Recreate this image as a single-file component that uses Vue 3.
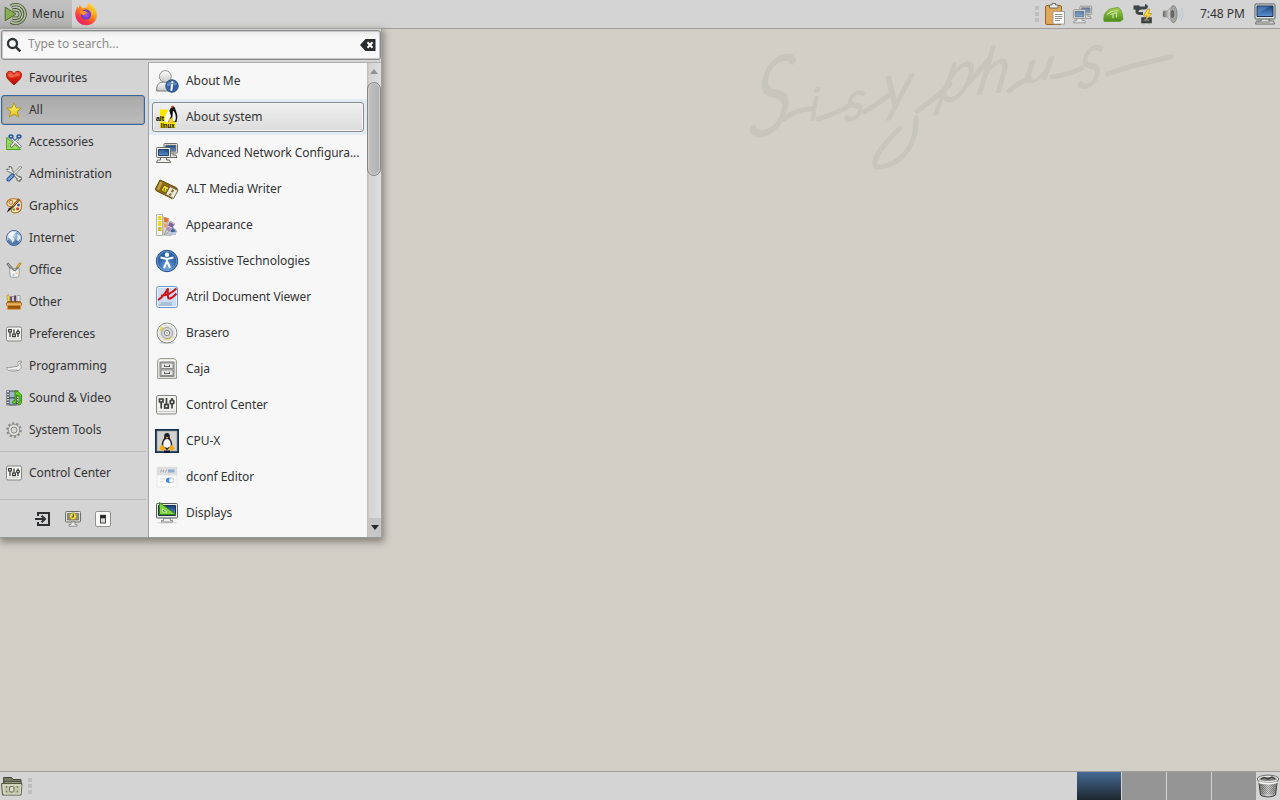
<script setup>
const categories = [
  ['heart', 'Favourites'],
  ['star', 'All'],
  ['accessories', 'Accessories'],
  ['tools', 'Administration'],
  ['palette', 'Graphics'],
  ['globe', 'Internet'],
  ['office', 'Office'],
  ['other', 'Other'],
  ['prefs', 'Preferences'],
  ['lamp', 'Programming'],
  ['media', 'Sound & Video'],
  ['gear', 'System Tools'],
]
const apps = [
  ['aboutme', 'About Me'],
  ['alt', 'About system'],
  ['network', 'Advanced Network Configura...'],
  ['usb', 'ALT Media Writer'],
  ['appearance', 'Appearance'],
  ['access', 'Assistive Technologies'],
  ['atril', 'Atril Document Viewer'],
  ['disc', 'Brasero'],
  ['cabinet', 'Caja'],
  ['control', 'Control Center'],
  ['cpux', 'CPU-X'],
  ['dconf', 'dconf Editor'],
  ['displays', 'Displays'],
]
</script>

<template>
  <div class="desktop">
    <svg class="defs" width="0" height="0">
      <defs>
        <linearGradient id="blue" x1="0" y1="0" x2="0" y2="1"><stop offset="0" stop-color="#16407c" /><stop offset="1" stop-color="#5f94d2" /></linearGradient>
        <linearGradient id="red" x1="0" y1="0" x2="0" y2="1"><stop offset="0" stop-color="#f04a30" /><stop offset=".5" stop-color="#d81f0c" /><stop offset="1" stop-color="#a81000" /></linearGradient>
        <linearGradient id="gold" x1="0" y1="0" x2="0" y2="1"><stop offset="0" stop-color="#fff48a" /><stop offset="1" stop-color="#e5c410" /></linearGradient>
        <linearGradient id="grey" x1="0" y1="0" x2="0" y2="1"><stop offset="0" stop-color="#fff" /><stop offset="1" stop-color="#c6c6c2" /></linearGradient>
        <linearGradient id="steel" x1="0" y1="0" x2="1" y2="0"><stop offset="0" stop-color="#686863" /><stop offset=".5" stop-color="#ddd" /><stop offset="1" stop-color="#777" /></linearGradient>
        <linearGradient id="fox" x1=".9" y1="0" x2=".2" y2="1"><stop offset="0" stop-color="#fff04b" /><stop offset=".4" stop-color="#ff9b1c" /><stop offset=".72" stop-color="#fb3e3c" /><stop offset="1" stop-color="#e41b87" /></linearGradient>
        <radialGradient id="glow"><stop offset="0" stop-color="#b45cf2" /><stop offset="1" stop-color="#5d36c8" /></radialGradient>
        <radialGradient id="earth" cx=".35" cy=".3"><stop offset="0" stop-color="#f2f8ff" /><stop offset=".5" stop-color="#a5bedc" /><stop offset="1" stop-color="#4c78b0" /></radialGradient>
        <radialGradient id="acc" cx=".5" cy=".8"><stop offset="0" stop-color="#77a6df" /><stop offset="1" stop-color="#2c62a8" /></radialGradient>
        <linearGradient id="green" x1="0" y1="0" x2="0" y2="1"><stop offset="0" stop-color="#a6d04c" /><stop offset="1" stop-color="#498a1e" /></linearGradient>
        <pattern id="mesh" width="2" height="2" patternUnits="userSpaceOnUse"><path d="M0 0h1v1H0zM1 1h1v1H1z" fill="#60605c" /></pattern>
      </defs>

      <symbol id="mate" viewBox="0 0 24 24">
        <g fill="none" stroke="#40552c" stroke-width="3.4"><path d="M6.500 4.200A9.400 9.400 0 1 1 6.500 19.800" /><path d="M8.500 7.800H12a4.200 4.200 0 0 1 0 8.400H8.500" /></g>
        <g fill="none" stroke="#b1bf9d" stroke-width="1.700"><path d="M6.500 4.200A9.400 9.400 0 1 1 6.500 19.800" /><path d="M8.500 7.800H12a4.200 4.200 0 0 1 0 8.400H8.500" /></g>
        <path d="M1.200 5.200L12 12 1.200 18.800z" fill="#88ad54" stroke="#4c6a2c" />
      </symbol>
      <symbol id="firefox" viewBox="0 0 24 24">
        <path d="M15.8.8C17 3 19 4 20.700 6.200l1 1.300c2.300 4.500 1.500 9.500-1.500 12.500-4.500 4.600-12 4.300-16.200-.200C.800 16.200.400 10.500 2.600 6.400L3 4.400l1.800 1.900L5.600 3.100 8.800 6l3.600-.600C13.500 3.600 14.200 2 15.800.8z" fill="url(#fox)" />
        <circle cx="12" cy="12.600" r="5" fill="url(#glow)" />
        <path d="M6 9.200c2 .5 3-.8 4.800-.1 1.400.6 2.400 1.100 2.700 2.300-1.300-.4-2 .2-2.900 1-1 .9-2.300.8-3.400-.3-.8-.7-1.200-1.700-1.200-2.900z" fill="#ff9920" />
        <path d="M13 5.500c3.500.8 5.500 3.800 5 7.500 1-1 1.400-2.600 1.300-4z" fill="#ffc92b" />
      </symbol>
      <symbol id="search" viewBox="0 0 16 16">
        <circle cx="6.500" cy="6.500" r="4.500" fill="none" stroke="#2e3436" stroke-width="2.300" /><path d="M9.800 9.800l4.500 4.500" stroke="#2e3436" stroke-width="2.600" />
      </symbol>
      <symbol id="clear" viewBox="0 0 16 12">
        <path d="M5.500 0H15.500V12H5.500L0 6z" fill="#2a2d2e" /><path d="M7.500 3.300l5 5.400M12.500 3.300l-5 5.400" stroke="#fff" stroke-width="2" />
      </symbol>

      <symbol id="heart" viewBox="0 0 16 16">
        <path d="M8 15C6 12.500.5 9.700.5 5 .5 2.600 2.100 1.300 4 1.300c1.800 0 3.200.9 4 2.500.8-1.600 2.200-2.500 4-2.500 2 0 3.500 1.300 3.500 3.700 0 4.700-5.500 7.500-7.500 10z" fill="url(#red)" stroke="#a01503" stroke-width=".9" />
        <path d="M2 5.500C2.200 3.300 5.200 2 7.500 5.300 10 2 13.800 3 14 5.500 11 6.500 8.500 6.300 7 7.500 5 8 3 7.600 2 5.500z" fill="#ff8772" opacity=".55" />
      </symbol>
      <symbol id="star" viewBox="0 0 16 16">
        <path d="M8 .8l2 5 5.300.3-4.100 3.500 1.500 5.300L8 12l-4.700 2.900 1.500-5.300L.7 6.100 6 5.800z" fill="url(#gold)" stroke="#b09010" stroke-width=".9" stroke-linejoin="round" />
      </symbol>
      <symbol id="accessories" viewBox="0 0 16 16">
        <path d="M.6 3.500V15.500H14.500z" fill="#9fe06a" stroke="#4ba11c" /><path d="M3 9v4h4.500z" fill="#d8e8cb" stroke="#58a82b" stroke-width=".7" />
        <path d="M6 5l8 7.500M11.500 5l-6 7" stroke="#70706c" stroke-width="3" stroke-linecap="round" /><path d="M6 5l8 7.500M11.500 5l-6 7" stroke="#eee" stroke-width="1.600" stroke-linecap="round" />
        <g fill="#c9d6e6" stroke="#295799" stroke-width="1.500"><ellipse cx="5" cy="2.500" rx="1.900" ry="1.500" /><ellipse cx="13" cy="2.500" rx="1.900" ry="1.500" /></g>
        <path d="M6.500 4.300L9 6.500l2.500-2.200" fill="none" stroke="#4e80c0" stroke-width="1.300" />
      </symbol>
      <symbol id="tools" viewBox="0 0 16 16">
        <g stroke-linecap="round"><path d="M4 4l8 8" stroke="#737370" stroke-width="3.200" /><path d="M1.300 3.500C1.500 5.500 4 6 5 5M3.500 1C5.500 1 6 3 5 5M11.500 11c-.8 2 .2 3.800 2.300 3.800M11.500 11c2-.6 3.800.3 3.500 2.300" fill="none" stroke="#737370" stroke-width="2.100" /><path d="M4 4l8 8M2 4.300L4 5 5 4 4.200 2M12 11.500l.5 2.200M12 12l2.200.6" fill="none" stroke="#f4f4f3" stroke-width="1.400" />
        <path d="M14.500 1.500L8 8" stroke="#80807e" stroke-width="2.500" /><path d="M14.500 1.500L8 8" stroke="#f4f4f3" stroke-width="1.200" />
        <path d="M6.500 9.500l-4 4" stroke="#244f8d" stroke-width="4" /><path d="M6.500 9.500l-4 4" stroke="#7aa7dc" stroke-width="2" /></g>
      </symbol>
      <symbol id="palette" viewBox="0 0 16 16">
        <path d="M3.500 1.500C6 .2 12 .5 14.500 3c1.500 2 1.300 8-.3 9.800-2 2.500-7.800 2.600-8.600.8-.8-2 1.300-3 .3-4.200C5 8.300 1.500 9 1 6.500.6 4.500 1.500 2.500 3.500 1.500z" fill="#fae8c5" stroke="#b66c18" stroke-width="1.100" />
        <circle cx="5" cy="4.300" r="2" fill="#d9d5cc" stroke="#b66c18" stroke-width=".9" /><circle cx="12.500" cy="7" r="1.500" fill="#3465a4" /><circle cx="8" cy="11.500" r="1.300" fill="#68a330" /><circle cx="11.500" cy="10.800" r="1.500" fill="#dc3522" /><circle cx="8.500" cy="4" r="1.100" fill="#e4dc3c" />
        <path d="M13.500 1L6 9.500" stroke="#6a4215" stroke-width="2.300" /><path d="M13.300 1.100L7 8.300" stroke="#db9c50" stroke-width="1" /><path d="M6.500 9L4.200 12 .7 14.800 3 10z" fill="#141414" />
      </symbol>
      <symbol id="globe" viewBox="0 0 16 16">
        <circle cx="8" cy="8" r="7.500" fill="url(#earth)" stroke="#36558a" stroke-width=".9" /><circle cx="8" cy="8" r="6.700" fill="none" stroke="#dbe6f2" stroke-width=".7" /><path d="M3 3.500C5.500 1 9 1.600 10 2.500L8.500 4 6.500 4.500 6 7l2.500 1.700L8 11l-2 2-.5-3.300L2 7zM11 4l3 1.500.5 3-2.500 3-1.500-2L11.500 7z" fill="#f2f6f9" opacity=".9" /><path d="M2 10a6.500 6.500 0 0 0 11.500 2" fill="none" stroke="#315d98" stroke-width="1.300" opacity=".6" />
      </symbol>
      <symbol id="office" viewBox="0 0 16 16">
        <path d="M14.500.8L9 9" stroke="#b47618" stroke-width="2.400" /><path d="M14 1.500L9 9" stroke="#f3bb59" stroke-width="1.100" /><path d="M1.300 1.200L7.500 9" stroke="#62625f" stroke-width="2.500" /><path d="M1.800 1.800L7.500 9" stroke="#c8c8c5" />
        <path d="M3.600 6.700h9.800l-.6 7.800c-.8 1.100-7.800 1.100-8.600 0z" fill="#f5f5f4" stroke="#8a8a86" stroke-width=".8" /><path d="M5 5l3.500 4M12 5L9 9" stroke="#7c7c76" stroke-width="1.300" /><path d="M6.500 11.500h2v2.500h-2z" fill="#acc8e7" /><path d="M9.500 10.500h2v1.500h-2z" fill="#e6bb89" />
      </symbol>
      <symbol id="other" viewBox="0 0 16 16">
        <path d="M.8 1.500l2-.8 1.500 8H2z" fill="#f1da4c" stroke="#a38b28" stroke-width=".6" /><path d="M4 2.500h2.500v6H4.500zM8 1.500h2v7H8z" fill="#5f3d70" /><path d="M6 2.500h2v6H6zM11 1.500h3V9h-3z" fill="#eee" stroke="#777" stroke-width=".6" />
        <path d="M2 7.500h12l1.500 2.500H.5z" fill="#c77a1c" stroke="#84500c" stroke-width=".7" /><path d="M.5 9h15v2.300H.5z" fill="#ffcf87" stroke="#9b5e10" stroke-width=".7" /><path d="M1.500 11.300h13v3.900h-13z" fill="#99550a" stroke="#d9902f" stroke-width=".9" />
      </symbol>
      <symbol id="prefs" viewBox="0 0 16 16">
        <rect x=".5" y="1" width="15" height="14" rx="1.500" fill="#f4f4f2" stroke="#858580" /><path d="M1.500 12.800h13" stroke="#d5d5d2" /><g fill="none" stroke="#31352f" stroke-width="1.200"><path d="M2.700 3.500h2.600v2.500H2.700zM4 6v5M8 3.500v4M12 3.500v1.500" /><rect x="6.700" y="8" width="2.600" height="2.600" /><circle cx="12" cy="6.500" r="1.400" /><path d="M12 8v3" /></g>
      </symbol>
      <symbol id="lamp" viewBox="0 0 16 16">
        <path d="M.5 9.500C4 10.200 6.500 8.700 10 8.500c1.500-.1 2.700-.5 2.200-2C11 4.500 11.500 2.800 15.500 3.300v1.400c-1.800-.2-2 .4-1.200 1.600 1.700 2.700 1 4.700-1.800 6C9.500 13.400 4.300 13.300 2 12 1 11.400.7 10.700.5 9.500z" fill="#f1f1f0" stroke="#91918d" stroke-width=".9" /><path d="M4 11.700h7" stroke="#c4c4c1" />
      </symbol>
      <symbol id="media" viewBox="0 0 16 16">
        <path d="M.5.5h12v15H.5z" fill="#3e4851" /><path d="M3.500 1.500H10v5.800H3.500zM3.500 8.500H10v6H3.500z" fill="#9fb7c9" /><path d="M2 1v14.500M11.500 1v14.500" stroke="#fff" stroke-width="1.500" stroke-dasharray="1.500 1.200" />
        <path d="M9 .8l3 .7 3.500 3.500v7.500c-.5 2.500-3.500 3-3.500 1.200 0-1.200.8-1.700 1.800-1.800V6.500L10.700 5v6.500c-.5 2.500-4.200 3-4.200 1 0-1.400 1.200-2 2.500-2z" fill="#69d21e" stroke="#288003" stroke-width=".9" />
      </symbol>
      <symbol id="gear" viewBox="0 0 16 16">
        <circle cx="8" cy="8" r="6.700" fill="none" stroke="#8a8a87" stroke-width="2.200" stroke-dasharray="2.200 2.010" /><circle cx="8" cy="8" r="5.700" fill="#dededc" stroke="#8a8a87" stroke-width=".8" /><circle cx="8" cy="8" r="3" fill="#d4d4d4" stroke="#8c8c88" />
      </symbol>
      <symbol id="logout" viewBox="0 0 16 16">
        <path d="M3 5V2h11v12H3v-3" fill="none" stroke="#2c3032" stroke-width="2" /><path d="M0 8h9M6.500 4.800L10 8l-3.500 3.200" fill="none" stroke="#2c3032" stroke-width="2" />
      </symbol>
      <symbol id="lock" viewBox="0 0 16 16">
        <rect x=".5" y=".5" width="15" height="10.500" rx="1" fill="#dedfda" stroke="#70706c" /><path d="M2.500 2.500h11v6.500h-11z" fill="#899086" stroke="#656a62" stroke-width=".7" /><path d="M6 11h4v2.500h2v1.800H4v-1.800h2z" fill="#e8e8e5" stroke="#777" stroke-width=".7" /><circle cx="8" cy="5.300" r="3.500" fill="#f4df4e" stroke="#9a8422" stroke-width=".8" /><path d="M8.300 3v3H6.500" stroke="#4b3d0b" fill="none" stroke-width="1.100" />
      </symbol>
      <symbol id="power" viewBox="0 0 16 16">
        <rect x=".5" y=".5" width="15" height="15" rx="1.500" fill="#fcfcfb" stroke="#92928e" /><rect x="5.500" y="4.300" width="5" height="7.700" fill="#ddd" stroke="#444" stroke-width="1" /><path d="M5.500 4.300h5v3h-5z" fill="#252525" />
      </symbol>

      <symbol id="aboutme" viewBox="0 0 24 24">
        <path d="M1.700 22c-.4-6 1.800-9 7-9s8.500 3 8 9z" fill="url(#grey)" stroke="#777771" /><circle cx="10.300" cy="7.500" r="5.900" fill="url(#grey)" stroke="#83837e" stroke-width=".9" /><circle cx="17" cy="17" r="6.200" fill="#3261a7" stroke="#244b88" /><path d="M11.800 15.500c1.500-4 8.500-4 10.400 0-3 1.500-6 .7-10.400 2z" fill="#90b2df" opacity=".5" /><path d="M17.300 13v.2M17 16l-.6 5" stroke="#fff" stroke-width="2" stroke-linecap="round" />
      </symbol>
      <symbol id="alt" viewBox="0 0 24 24">
        <path d="M5 4.500h8.500v11H5zM5 16.500h15.500V23H5z" fill="#ffe800" /><path d="M15.500 3.500L17.500.8l2.500 2c.5 3.500 2.500 5 2.300 9.500l-.8 4.700-7.500.2-3-1.500.5-5z" fill="#101010" /><path d="M14 5c-3 3-4.800 8-3 12h2l3-6zM18 5.500c3 3 3.500 7 2 11h-3z" fill="#fff" /><path d="M16 1.500l2-1 1 1.300-3 1.200z" fill="#e65828" /><path d="M13.500 15l4-3 1 6h-5z" fill="#f3ca2c" />
        <text x="1" y="15.500" font-family="Liberation Sans" font-weight="700" font-size="8" textLength="8" lengthAdjust="spacingAndGlyphs">alt</text><text x="5.500" y="22.700" font-family="Liberation Sans" font-weight="700" font-size="7.500" textLength="14" lengthAdjust="spacingAndGlyphs">linux</text>
      </symbol>
      <symbol id="network" viewBox="0 0 24 24">
        <g stroke="#5e605a" stroke-width=".9"><path d="M14 11h4v3h3l1 2.500H12z" fill="#e3e3df" /><rect x="9" y="2.500" width="13.500" height="9.500" rx="1" fill="#e9e9e5" /><path d="M10.800 4.300H20.700v5.900h-9.900z" fill="url(#blue)" /><path d="M5.500 16h6v3h3l1 2.500H1.500l1-2.500h3z" fill="#f0f0ed" /><rect x="1.500" y="6.500" width="14" height="10" rx="1" fill="#ebebe7" /><path d="M3.500 8.500h10V14.500h-10z" fill="url(#blue)" stroke="#173762" /></g><path d="M4 9h7.500L5 13H4z" fill="#638fc5" opacity=".35" />
      </symbol>
      <symbol id="usb" viewBox="0 0 24 24">
        <path d="M5 3l16 7.500c1.500 1 1.800 2 1 3L17 21.500 1.800 14c-1.600-.9-1.700-2-.8-3.200z" fill="#926d13" stroke="#604306" /><path d="M5 4.500L2 12l2 1.300 3.500-8z" fill="#c5a344" /><path d="M9 8l5 2.500-3 5.500-5-2.500z" fill="#f1e11d" stroke="#69500d" /><path d="M9.500 11l-.5 3M12 12l-1.300 2.500" stroke="#8b7119" /><path d="M15 9.500l8 4-4.500 8-8-4z" fill="#ebe9dc" stroke="#736841" /><path d="M17.200 12.200l-1.500 2.500 2 1 1.400-2.500zM15 16l-1.500 2 2 .9 1.400-2z" fill="#8e6e20" />
      </symbol>
      <symbol id="appearance" viewBox="0 0 24 24">
        <path d="M8 22V4l6 1.500-4 16.500zM9 22l6-14 5 3-9 11zM10 22l8-8 4 4.500-6 4z" fill="#dcdbd8" stroke="#9b9b95" stroke-width=".7" /><path d="M9 4.500l4.500 1-1.300 4.200-3-.8z" fill="#ee6c28" /><path d="M9 10l3.200.9-.8 4-2.400-.6z" fill="#f4a35d" /><path d="M14.800 9l4.400 2.500-2 3.200-3.900-2z" fill="#7960a5" /><path d="M12.800 13.500l3.500 1.700-2.200 3.300-2.600-1.500z" fill="#aa90bc" /><path d="M18 15l3.300 3.500-3 2.500-3.200-3z" fill="#41659d" /><path d="M9 22h12v-3.500l-6 1z" fill="#b7c8dc" /><path d="M1.500 1.500h6v21h-6z" fill="#f5f5ef" stroke="#aaa996" stroke-width=".8" /><path d="M3 3h3.500v4H3zM3 8h3.500v5H3z" fill="#f2d819" /><path d="M3 14h3.500v4H3z" fill="#d8b72a" />
      </symbol>
      <symbol id="access" viewBox="0 0 24 24">
        <circle cx="12" cy="12" r="10.700" fill="url(#acc)" stroke="#244c8c" stroke-width="1" /><circle cx="12" cy="12" r="9.700" fill="none" stroke="#75a1d5" stroke-width=".8" /><circle cx="12" cy="5.800" r="2.200" fill="#fff" /><path d="M5.500 8.500L12 10 18.500 8.500M12 10v5M11.500 13L9 19M12.500 13l2.500 6" fill="none" stroke="#fff" stroke-width="2" />
      </symbol>
      <symbol id="atril" viewBox="0 0 24 24">
        <rect x="1.500" y="1.500" width="21" height="21" rx="2" fill="#cadcf0" stroke="#7198c8" /><rect x="2.500" y="2.500" width="19" height="19" rx="1" fill="none" stroke="#ecf4fc" /><path d="M6 18h11M4 20h13" stroke="#8ea4bd" stroke-width="1.200" /><g fill="none" stroke="#ce1416" stroke-width="2"><path d="M3 15C7.500 12.500 10.500 8 13 3.500c-.5 4-.5 6 0 8M6 10.500c5 .5 9-1 15.500-7" /><path d="M13 10.500c-.5 6 5 2 8.500-2" /></g>
      </symbol>
      <symbol id="disc" viewBox="0 0 24 24">
        <ellipse cx="12" cy="21.500" rx="8" ry="1.300" fill="#ccc" /><circle cx="12" cy="12" r="9.900" fill="#e2e2df" stroke="#81817d" /><circle cx="12" cy="12" r="8.900" fill="none" stroke="#fff" /><path d="M6 5l4 4-2 2.500L4.500 9zM9 18c3 1.500 6 1 8.500-1.500L15 14l-6 2z" fill="#e5d85f" /><circle cx="12" cy="12" r="5.500" fill="#d8d8df" stroke="#a0a09e" /><circle cx="12" cy="12" r="2.700" fill="#fff" stroke="#7e7e7b" /><circle cx="12" cy="12" r="1" fill="#aaa" />
      </symbol>
      <symbol id="cabinet" viewBox="0 0 24 24">
        <path d="M2.500 3.500L5 1.500h14l2.500 2v18h-19z" fill="#e4e4df" stroke="#a0a09a" /><path d="M4 3.500h16" stroke="#fff" stroke-width="1.200" /><path d="M5 5h14v14.500H5z" fill="#c5c6c1" stroke="#8a8c88" /><path d="M6 6h12v5.500H6zM6 13h12v5.500H6z" fill="#e9eae7" stroke="#777974" stroke-width=".8" /><path d="M9.500 7.800v1.700h5V7.800M9.500 14.800v1.700h5v-1.700" fill="none" stroke="#666963" stroke-width="1.100" />
      </symbol>
      <symbol id="control" viewBox="0 0 24 24">
        <rect x="1.500" y="2.500" width="20" height="18.500" rx="1.500" fill="#f2f2f0" stroke="#858580" /><path d="M2.500 18.500h18" stroke="#c9c9c5" /><g fill="none" stroke="#3b403a" stroke-width="1.700"><path d="M4.500 6h3.500v3H4.500zM6.200 9v6.500M11.500 5v6M17 5v2" /><rect x="9.700" y="11.500" width="3.600" height="3.500" /><circle cx="17" cy="9" r="1.900" /><path d="M17 11v4.500" /></g>
      </symbol>
      <symbol id="cpux" viewBox="0 0 24 24">
        <path d="M0 0h24v24H0z" fill="#102f55" /><path d="M2 2h20v20H2z" fill="#d2d3cf" stroke="#8f9493" stroke-width=".7" /><path d="M12 4c-2.800 0-3 2.300-2.800 5C8 11 6 14 7 18l5 3 5-3c1-4-1-7-2.200-9C15 6.300 14.800 4 12 4z" fill="#202327" /><path d="M12 10c-2.800 0-4.300 4-3.500 7.500L12 19l3.500-1.500C16.300 14 14.800 10 12 10z" fill="#fff" /><path d="M10.500 8h3L12 9.700zM7 15.500l4 4.500-4 1.700-3-2.200zM17 15.500L13 20l4 1.700 3-2.200z" fill="#f4ad16" /><path d="M9 21.500h6V24H9z" fill="#0a1625" />
      </symbol>
      <symbol id="dconf" viewBox="0 0 24 24">
        <rect x="2" y="2" width="20" height="20" rx="1" fill="#fafafa" stroke="#e2e2e2" stroke-width=".7" /><path d="M2 2h20v8.500H2z" fill="#dedede" /><path d="M5.500 7.500l1-3M9 5l-1.500 1L9 7M10.500 7.500l1-3" stroke="#aaa" fill="none" /><path d="M13 4.500h6.500v3H13z" fill="#8dacd2" /><path d="M5 14h5M5 16.500h3.500" stroke="#e1e1e1" /><rect x="11" y="12.800" width="8" height="5" rx="2.500" fill="#3584e4" /><circle cx="16.500" cy="15.300" r="2.400" fill="#fff" stroke="#bdd3ee" stroke-width=".5" />
      </symbol>
      <symbol id="displays" viewBox="0 0 24 24">
        <ellipse cx="12" cy="21.700" rx="10" ry="1" fill="#ddd" /><path d="M9 17h6l.5 2.500h2V21h-11v-1.500h2z" fill="#eee" stroke="#777" stroke-width=".8" /><rect x="1.500" y="2.500" width="21" height="14.500" rx="1" fill="#e9eae7" stroke="#555c5b" /><path d="M3.500 4.500h17v10h-17z" fill="url(#blue)" stroke="#163358" /><path d="M4.500 1.500v12h16.500z" fill="#80d242" stroke="#368c0b" /><path d="M7.500 8v3h4.500z" fill="#397154" stroke="#d7f4b9" stroke-width=".8" />
      </symbol>

      <symbol id="clipboard" viewBox="0 0 24 24">
        <rect x="2.500" y="3.500" width="16" height="19" rx="1.500" fill="#dfa758" stroke="#a1641d" /><path d="M6.500 6V3H9V1.500h3.500V3H15v3z" fill="#f1f1ee" stroke="#5f625c" stroke-width=".9" /><path d="M10 9.500h11.500V22H10z" fill="#fff" stroke="#8f8f8b" stroke-width=".8" /><path d="M12 12.500h7.500M12 14.500h7.500M12 16.500h7M12 18.500h5" stroke="#91918d" />
      </symbol>
      <symbol id="usbtray" viewBox="0 0 24 24">
        <path d="M3 19.500C2 12.500 5 9 9 7l7-1.500c4 0 5.500 5.500 6 12l-3 2z" fill="url(#green)" stroke="#6c9a35" stroke-width=".8" /><path d="M6 12.500l4.500-3 6.500-1M12 12v4M9.500 12.500l6-2v5" fill="none" stroke="#c8e59d" stroke-width="1.200" />
      </symbol>
      <symbol id="plug" viewBox="0 0 24 24">
        <path d="M4 6h8.500c3 0 4-2 1.500-2.500M10 6c-5 1-5.500 5.500-1 5.500h3" fill="none" stroke="#3f4647" stroke-width="3" /><path d="M2.500 5.500h6" stroke="#3f4647" stroke-width="4.200" /><path d="M11 16h9v4.500h-9z" fill="#4a5151" stroke="#3a4040" stroke-width="1.600" /><path d="M13 21v1.500M18 21v1.500M13 18h5" stroke="#8c9191" /><path d="M16.500 7L12.500 14H16l-1.500 4.500L21 11.500h-3.500L19 7z" fill="#ffd63b" stroke="#af8124" stroke-width=".6" />
      </symbol>
      <symbol id="speaker" viewBox="0 0 24 24">
        <path d="M2 9h4l6-5.500c3 1 4 5 4 8.500s-1 8-4 9l-6-6H2z" fill="url(#steel)" stroke="#8b8e88" stroke-width=".6" /><ellipse cx="12.500" cy="12" rx="3.400" ry="8.500" fill="#a5a6a2" stroke="#85878a" stroke-width=".7" /><ellipse cx="11.500" cy="12" rx="1.800" ry="4" fill="#656862" /><path d="M18 8c1.300 3 1.300 5 0 8M20.500 6c1.700 4 1.700 8 0 12" fill="none" stroke="#b3c8df" stroke-width="1" />
      </symbol>
      <symbol id="monitor" viewBox="0 0 24 24">
        <path d="M8 16h8v3h4.500l1 3H2.500l1-3H8z" fill="#ddddda" stroke="#696b67" /><rect x="2" y="2" width="20" height="15" rx="1" fill="#e6e6e2" stroke="#555c5a" /><path d="M4 4h16v10.500H4z" fill="url(#blue)" stroke="#162f53" /><path d="M4.500 4.500h13l-13 7z" fill="#6e9cd1" opacity=".5" /><path d="M4 20h13" stroke="#777" />
      </symbol>
      <symbol id="folder" viewBox="0 0 24 24">
        <path d="M3.500 12V3.500h8l1.500 2h8V11z" fill="#74795f" stroke="#46493a" /><path d="M4 7.500h17V11H4z" fill="#969b80" stroke="#4f533f" /><path d="M1.500 9.500h20.500L21 21H2.500z" fill="#c4c7ae" stroke="#56593f" stroke-linejoin="round" /><path d="M3 11h18l-.8 9H4z" fill="none" stroke="#dcdec9" /><rect x="9.500" y="12.500" width="4.500" height="5.500" rx="1.500" fill="#dcdec9" stroke="#696d51" /><path d="M7.500 12.500H6.500v1.500M6.500 16.500V18h1M16.500 12.500h1v1.500M17.500 16.500V18h-1" fill="none" stroke="#767a60" />
      </symbol>
      <symbol id="trash" viewBox="0 0 24 24">
        <path d="M2.500 5l2 16c3 2.500 12 2.500 15 0l2-16z" fill="url(#steel)" stroke="#41423f" /><path d="M4 9.500l1.500 10c3 1.500 10 1.500 13 0l1.500-10c-4 1.500-12 1.500-16 0z" fill="url(#mesh)" opacity=".6" /><ellipse cx="12" cy="5" rx="10" ry="3" fill="#898a86" stroke="#e7e7e5" stroke-width="1.800" /><ellipse cx="12" cy="5" rx="10.800" ry="3.900" fill="none" stroke="#4c4d49" stroke-width=".8" /><path d="M5 5l3-1.500 4 1.500 4-2 3 2" stroke="#333" fill="none" stroke-width="1.300" /><path d="M2.500 8c4 2 15 2 19 0" fill="none" stroke="#f6f6f4" stroke-width="1.500" />
      </symbol>
    </svg>

    <svg class="signature" viewBox="740 20 440 160">
      <g class="lettering">
        <text transform="translate(748 139) rotate(-15) skewX(-22) scale(.86 1)" font-size="100">S</text>
        <text transform="translate(810 120) rotate(-12) skewX(-14)" font-size="42">i</text>
        <text transform="translate(845 121) rotate(-13) skewX(-16)" font-size="50">s</text>
        <text transform="translate(883 109) rotate(-6) skewX(-8)" font-size="62">y</text>
        <text transform="translate(937 101) rotate(-2) skewX(-18) scale(.8 1)" font-size="74">p</text>
        <text transform="translate(976 94) rotate(-6) skewX(-16) scale(.95 1)" font-size="62">h</text>
        <text transform="translate(1022 84) rotate(-12) skewX(-22) scale(1.200 .8)" font-size="50">u</text>
        <text transform="translate(1078 89) rotate(-14) skewX(-18) scale(.85 1)" font-size="74">s</text>
      </g>
      <path class="flourish" d="M784 119Q798 108 812 109M818 119Q838 113 852 104M864 112Q878 104 889 95M900 128C884 144 869 162 877 167C897 167 917 149 916 118M917 111Q936 98 950 84M968 84L990 58M1009 91Q1020 82 1030 78M1052 77Q1068 75 1082 68M1108 74Q1128 66 1171 57" />
    </svg>

    <header class="panel top">
      <div class="menu-button"><svg class="i24"><use href="#mate" /></svg><span>Menu</span></div>
      <svg class="i24 fox"><use href="#firefox" /></svg>
      <div class="tray">
        <i class="grip"></i>
        <svg class="i24"><use href="#clipboard" /></svg>
        <svg class="net"><use href="#network" /></svg>
        <svg class="i24"><use href="#usbtray" /></svg>
        <svg class="i24"><use href="#plug" /></svg>
        <svg class="i24"><use href="#speaker" /></svg>
      </div>
      <span class="clock">7:48 PM</span>
      <svg class="i24 show"><use href="#monitor" /></svg>
    </header>

    <main class="menu">
      <div class="search">
        <svg class="i16"><use href="#search" /></svg><span>Type to search...</span><svg class="clear"><use href="#clear" /></svg>
      </div>
      <div class="columns">
        <nav class="left">
          <div v-for="([icon, label], n) in categories" :key="label" class="cat" :class="{ active: n === 1 }">
            <svg class="i16"><use :href="'#' + icon" /></svg><span>{{ label }}</span>
          </div>
          <div class="cc"><div class="cat"><svg class="i16"><use href="#prefs" /></svg><span>Control Center</span></div></div>
          <div class="session">
            <svg class="i16"><use href="#logout" /></svg><svg class="i16"><use href="#lock" /></svg><svg class="i16"><use href="#power" /></svg>
          </div>
        </nav>
        <section class="list">
          <div class="rows">
            <div v-for="([icon, label], n) in apps" :key="label" class="row" :class="{ hover: n === 1 }">
              <div class="item"><svg class="i24"><use :href="'#' + icon" /></svg><span>{{ label }}</span></div>
            </div>
          </div>
          <div class="scroll">
            <svg class="arrow up" viewBox="0 0 8 5"><path d="M0 5L4 0l4 5z" /></svg>
            <div class="thumb"></div>
            <div class="stepper"><svg class="arrow down" viewBox="0 0 8 5"><path d="M0 0h8L4 5z" /></svg></div>
          </div>
        </section>
      </div>
    </main>

    <footer class="panel bottom">
      <svg class="i24 files"><use href="#folder" /></svg>
      <i class="grip"></i>
      <div class="spaces"><b class="current"></b><b></b><b></b><b></b></div>
      <svg class="i24"><use href="#trash" /></svg>
    </footer>
  </div>
</template>

<style>
body { margin: 0; overflow: hidden; }
</style>
<style scoped>
* { box-sizing: border-box; }
.desktop { position: relative; width: 1280px; height: 800px; display: flex; flex-direction: column; background: #d2cfc7; font: 12px/16px "Noto Sans", sans-serif; color: #333; overflow: hidden; }
.defs { position: absolute; }
.i24 { width: 24px; height: 24px; flex: none; }
.i16 { width: 16px; height: 16px; flex: none; }
.signature { position: absolute; left: 740px; top: 20px; width: 440px; height: 160px; filter: blur(.7px); overflow: visible; }
.lettering { font-family: Lato, sans-serif; font-weight: 300; font-style: italic; fill: #c7c6bd; stroke: #c7c6bd; stroke-width: 2.5; stroke-linejoin: round; }
.flourish { fill: none; stroke: #c7c6bd; stroke-width: 5; stroke-linecap: round; }
.panel { display: flex; align-items: center; background: #d4d4d4; flex: none; height: 29px; }
.top { position: relative; border-bottom: 1px solid #a09f9d; }
.menu-button { width: 72px; height: 28px; padding-left: 4px; display: flex; align-items: center; gap: 4px; background: linear-gradient(#c2c2c2, #b2b2b2); }
.fox { margin-left: 2px; }
.tray { display: flex; align-items: center; gap: 6px; margin-left: auto; }
.grip { width: 4px; height: 16px; background: repeating-linear-gradient(#bebebe 0 4px, transparent 4px 6px); }
.tray .grip { margin-right: -2px; }
.net { width: 21px; height: 21px; margin: 0 2px 0 -1px; opacity: .65; }
.clock { margin-left: 15px; }
.show { margin: 0 3px 0 8px; }
.menu { position: relative; width: 382px; height: 510px; margin-top: -1px; padding-top: 1px; background: #d4d4d4; border-top: 1px solid #a09f9d; border-right: 1px solid #a1a1a1; border-bottom: 1px solid #999; box-shadow: 1px 3px 7px 1px #55504a99; display: flex; flex-direction: column; }
.search { margin-left: 1px; width: 380px; height: 30px; flex: none; border: 1px solid #8b8b8b; border-radius: 3px; background: linear-gradient(#e9e9e9, #f8f8f8 25%, #f8f8f8); box-shadow: inset 0 0 0 1px #c8c8c8; display: flex; align-items: center; padding: 0 4px 0 4px; gap: 6px; color: #8b8b8b; }
.search .i16 { margin-top: -1px; }
.search span { margin-top: -2px; letter-spacing: -.04px; }
.clear { width: 16px; height: 12px; margin: -1px 0 0 auto; }
.columns { display: flex; flex: 1; min-height: 0; padding-top: 1px; }
.left { width: 148px; padding-top: 2px; letter-spacing: -.05px; }
.cat { height: 30px; margin: 0 3px 2px 1px; border: 1px solid transparent; border-radius: 3px; display: flex; align-items: center; gap: 7px; padding-left: 4px; }
.cat span { margin-top: -1px; }
.active { border-color: #36689b; background: linear-gradient(#a9a9a9, #bcbcbc); box-shadow: inset 0 0 1px 1px #9e9e9e; }
.cc { margin: 6px 2px 0 0; border-top: 1px solid #bdbdbd; border-bottom: 1px solid #bdbdbd; height: 49px; padding-top: 6px; }
.session { height: 37px; display: flex; align-items: center; gap: 14px; padding-left: 35px; }
.list { width: 233px; margin-top: 1px; display: flex; border-left: 1px solid #a3a3a3; border-top: 1px solid #b0b0b0; background: #f7f7f7; overflow: hidden; }
.rows { width: 218px; flex: none; }
.row { height: 36px; padding: 3px; }
.item { height: 30px; width: 212px; border: 1px solid transparent; border-radius: 3px; display: flex; align-items: center; gap: 7px; padding-left: 2px; white-space: nowrap; letter-spacing: -.06px; }
.item span { margin-top: -1px; }
.hover { background: #e3ebf4; }
.hover .item { border-color: #8d8d8d; background: linear-gradient(#f0f0f0, #dcdcdc); box-shadow: inset 0 0 0 1px #f5f5f5; }
.scroll { width: 14px; flex: none; background: linear-gradient(90deg, #bfbfbf 0 1px, #d4d4d4 2px, #dedede); display: flex; flex-direction: column; align-items: center; }
.arrow { width: 8px; height: 5px; fill: #929292; margin: 6px 0 8px; }
.thumb { width: 14px; height: 94px; border: 1px solid #858585; border-radius: 7px; background: linear-gradient(90deg, #c2c2c2, #b0b0b0); box-shadow: inset 0 0 0 1px #d0d0d0; }
.stepper { width: 13px; height: 19px; margin: auto 0 0 1px; background: #c6c6c6; display: flex; justify-content: center; align-items: center; }
.down { fill: #292929; margin: 0; }
.bottom { border-top: 1px solid #a09f9a; margin-top: auto; }
.files { margin-right: 4px; }
.spaces { display: flex; gap: 1px; height: 28px; margin-left: auto; margin-right: 0; }
.spaces b { width: 44px; background: #959595; }
.spaces .current { background: linear-gradient(#456a95, #1e272e); }
</style>
